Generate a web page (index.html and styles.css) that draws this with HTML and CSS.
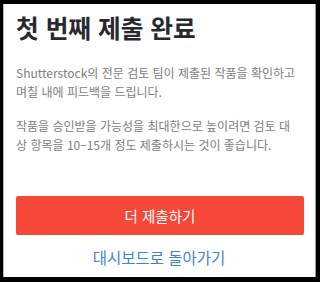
FILE: index.html
```html
<!DOCTYPE html>
<html lang="ko">
<head>
<meta charset="utf-8">
<link rel="stylesheet" href="styles.css">
</head>
<body>
<div class="modal">
  <h1 class="title">첫 번째 제출 완료</h1>
  <p class="text para-first">Shutterstock의 전문 검토 팀이 제출된 작품을 확인하고 며칠 내에 피드백을 드립니다.</p>
  <p class="text para-second">작품을 승인받을 가능성을 최대한으로 높이려면 검토 대상 항목을 10–15개 정도 제출하시는 것이 좋습니다.</p>
  <button class="btn-primary">더 제출하기</button>
  <a class="link" href="#">대시보드로 돌아가기</a>
</div>
</body>
</html>
```

FILE: styles.css
```css
html, body {
  margin: 0;
  padding: 0;
  background: #000;
}
body {
  width: 320px;
  height: 282px;
  overflow: hidden;
  font-family: "Noto Sans CJK KR", sans-serif;
}
.modal {
  box-sizing: border-box;
  margin: 4px 0 0 3px;
  width: 313px;
  height: 273px;
  background: #fff;
  border-left: 1px solid #b5b5b5;
  border-right: 1px solid #9a9a9a;
  padding: 8px 12px 0 11px;
  display: flex;
  flex-direction: column;
}
.title {
  margin: 0;
  font-size: 24.7px;
  line-height: 30px;
  font-weight: 700;
  color: #262a2e;
  padding-left: 1px;
}
.text {
  margin: 0 5.5px 0 0;
  font-size: 12px;
  line-height: 19px;
  color: #7d7d7d;
  padding-left: 1px;
  word-break: break-all;
}
.para-first {
  margin-top: 21px;
}
.para-second {
  margin-top: 15px;
}
.btn-primary {
  margin-top: 42px;
  height: 39px;
  width: 288px;
  margin-left: 1px;
  border: none;
  border-radius: 2px;
  background: #f64838;
  color: #fff;
  font-family: "Noto Sans CJK KR", sans-serif;
  font-size: 14.5px;
  padding: 0;
}
.link {
  margin-top: 12px;
  align-self: center;
  font-size: 15.5px;
  line-height: 20px;
  color: #3f86c8;
  text-decoration: none;
}
```
